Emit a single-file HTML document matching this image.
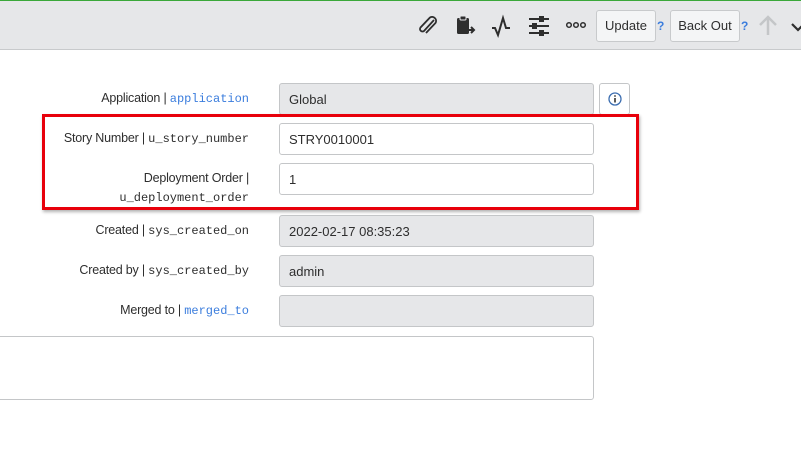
<!DOCTYPE html>
<html><head><style>
body{margin:0;width:801px;height:454px;background:#fff;position:relative;overflow:hidden;font-family:"Liberation Sans",sans-serif;color:#2e2e2e}
.hdr{position:absolute;left:0;top:0;width:801px;height:48px;background:#e6e7e9;border-top:1px solid #3aa83a;border-bottom:1px solid #c8cacc}
.btn{position:absolute;top:9px;height:30px;border:1px solid #c8cacc;border-radius:3px;background:#f4f5f6;font-size:13px;line-height:30px;text-align:center;color:#2e2e2e}
.q{position:absolute;top:18px;font-size:12px;color:#3b7ddd;font-weight:bold}
.lbl{position:absolute;right:552px;font-size:12.5px;text-align:right;white-space:nowrap;letter-spacing:-0.2px}
.m{font-family:"Liberation Mono",monospace;font-size:12px;letter-spacing:0}
.b{color:#3b7ddd}
.in{position:absolute;left:279px;border:1px solid #c4c6c8;border-radius:3px;background:#e6e7e9;font-size:13px;line-height:31px;padding-left:9px;box-sizing:border-box;width:315px;height:32px}
.w{background:#fff}
</style></head><body>
<div class="hdr">
<svg style="position:absolute;left:416px;top:13px" width="24" height="24" viewBox="0 0 24 24" fill="none" stroke="#2e2e2e" stroke-width="1.8"><path d="M18 6 L8 17 a2.5 2.5 0 0 1 -3.5 -3.5 L14 3.5 a4 4 0 0 1 5.5 5.5 L10 19"/></svg>
<svg style="position:absolute;left:455px;top:13px" width="22" height="24" viewBox="0 0 22 24"><rect x="2" y="4" width="12" height="16" rx="1.5" fill="#2e2e2e"/><rect x="5" y="2" width="6" height="4" rx="1" fill="#2e2e2e" stroke="#e6e7e9"/><path d="M12 16h7M16 13l3 3-3 3" stroke="#2e2e2e" stroke-width="2" fill="none"/></svg>
<svg style="position:absolute;left:490px;top:13px" width="24" height="24" viewBox="0 0 24 24" fill="none" stroke="#2e2e2e" stroke-width="2"><path d="M2 14h3l3 7 5-17 3 10h4"/></svg>
<svg style="position:absolute;left:527px;top:13px" width="24" height="24" viewBox="0 0 24 24" stroke="#2e2e2e" stroke-width="2"><path d="M2 5h20M2 12h20M2 19h20"/><rect x="13" y="3" width="3" height="4" fill="#2e2e2e"/><rect x="6" y="10" width="3" height="4" fill="#2e2e2e"/><rect x="13" y="17" width="3" height="4" fill="#2e2e2e"/></svg>
<svg style="position:absolute;left:565px;top:19px" width="22" height="10" viewBox="0 0 22 10" fill="none" stroke="#2e2e2e" stroke-width="1.5"><circle cx="4" cy="5" r="2.3"/><circle cx="11" cy="5" r="2.3"/><circle cx="18" cy="5" r="2.3"/></svg>
<div class="btn" style="left:596px;width:58px">Update</div><div class="q" style="left:657px">?</div>
<div class="btn" style="left:670px;width:68px">Back Out</div><div class="q" style="left:741px">?</div>
<svg style="position:absolute;left:757px;top:13px" width="22" height="24" viewBox="0 0 22 24" fill="none" stroke="#c4c6c8" stroke-width="2.5"><path d="M11 21V4M3 11l8-8 8 8"/></svg>
<svg style="position:absolute;left:790px;top:18px" width="14" height="14" viewBox="0 0 14 14" fill="none" stroke="#2e2e2e" stroke-width="2.2"><path d="M2 5l6 6 6-6"/></svg>
</div>

<div class="lbl" style="top:91px">Application | <span class="m b">application</span></div>
<div class="in" style="top:83px">Global</div>
<div style="position:absolute;left:599px;top:83px;width:31px;height:32px;border:1px solid #c4c6c8;border-radius:3px;box-sizing:border-box"><svg style="position:absolute;left:8px;top:8px" width="14" height="14" viewBox="0 0 14 14"><circle cx="7" cy="7" r="6" fill="none" stroke="#3b6db0" stroke-width="1.3"/><rect x="6.2" y="6" width="1.6" height="4.5" fill="#333"/><circle cx="7" cy="4" r="0.9" fill="#333"/></svg></div>

<div class="lbl" style="top:131px">Story Number | <span class="m">u_story_number</span></div>
<div class="in w" style="top:123px">STRY0010001</div>
<div class="lbl" style="top:169px;line-height:19px">Deployment Order |<br><span class="m">u_deployment_order</span></div>
<div class="in w" style="top:163px">1</div>
<div style="position:absolute;left:42px;top:114px;width:597px;height:96px;border:3px solid #e8000b;box-sizing:border-box;box-shadow:1px 2px 3px rgba(0,0,0,.3)"></div>

<div class="lbl" style="top:223px">Created | <span class="m">sys_created_on</span></div>
<div class="in" style="top:215px">2022-02-17 08:35:23</div>
<div class="lbl" style="top:263px">Created by | <span class="m">sys_created_by</span></div>
<div class="in" style="top:255px">admin</div>
<div class="lbl" style="top:303px">Merged to | <span class="m b">merged_to</span></div>
<div class="in" style="top:295px"></div>
<div style="position:absolute;left:-3px;top:336px;width:597px;height:64px;border:1px solid #c4c6c8;border-radius:3px;box-sizing:border-box"></div>
</body></html>
